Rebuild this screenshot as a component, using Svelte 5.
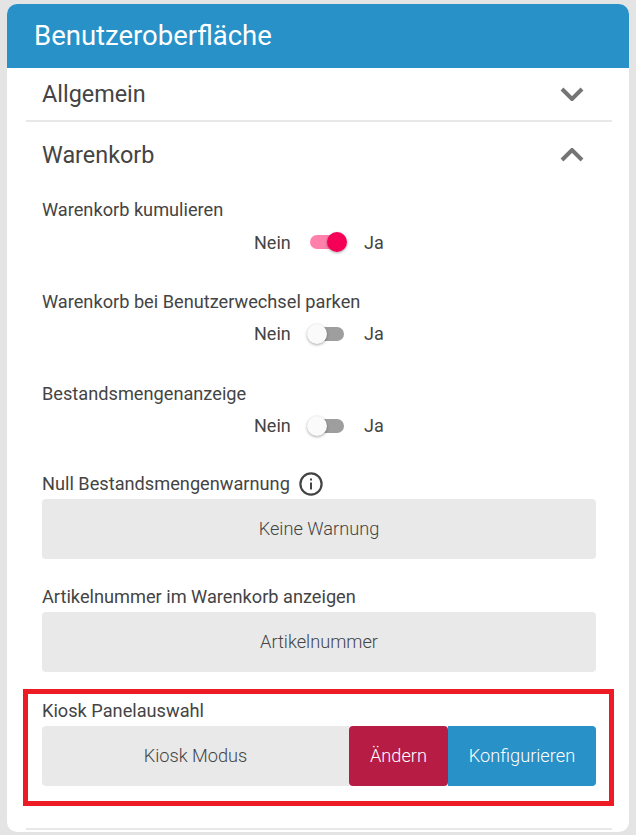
<script>
	const toggles = [
		{ label: 'Warenkorb kumulieren', on: true },
		{ label: 'Warenkorb bei Benutzerwechsel parken', on: false },
		{ label: 'Bestandsmengenanzeige', on: false }
	];
</script>

<div class="page">
	<div class="card">
		<h1 class="head">Benutzeroberfläche</h1>

		<div class="section first">
			<h2>Allgemein</h2>
			<svg class="chev" viewBox="0 0 24 14" width="24" height="14"><path d="M2 2 L12 12 L22 2" /></svg>
		</div>

		<div class="section open">
			<h2>Warenkorb</h2>
			<svg class="chev" viewBox="0 0 24 14" width="24" height="14"><path d="M2 12 L12 2 L22 12" /></svg>
		</div>

		<div class="fields">
			{#each toggles as t}
				<div class="field toggle-field">
					<div class="label">{t.label}</div>
					<div class="toggle-row">
						<span class="no">Nein</span>
						<span class="switch" class:on={t.on}><span class="thumb"></span></span>
						<span class="yes">Ja</span>
					</div>
				</div>
			{/each}

			<div class="field select-field">
				<div class="label">
					Null Bestandsmengenwarnung
					<svg class="info" viewBox="0 0 24 24" width="24" height="24">
						<circle cx="12" cy="12" r="10.6" />
						<rect x="11" y="10.5" width="2" height="7" />
						<rect x="11" y="6.5" width="2" height="2" />
					</svg>
				</div>
				<div class="select">Keine Warnung</div>
			</div>

			<div class="field select-field">
				<div class="label">Artikelnummer im Warenkorb anzeigen</div>
				<div class="select">Artikelnummer</div>
			</div>

			<div class="field select-field kiosk">
				<div class="label">Kiosk Panelauswahl</div>
				<div class="group">
					<div class="select">Kiosk Modus</div>
					<button class="btn change">Ändern</button>
					<button class="btn config">Konfigurieren</button>
				</div>
				<div class="highlight"></div>
			</div>
		</div>

		<div class="end"></div>
	</div>
</div>

<style>
	:global(body) {
		margin: 0;
		background: #e4e4e4;
	}

	.page {
		padding: 4px 7px 3px;
		font-family: Roboto, 'Liberation Sans', sans-serif;
		color: #444;
	}

	.card {
		background: #fff;
		border-radius: 10px;
		height: 828px;
		overflow: hidden;
		display: flex;
		flex-direction: column;
	}

	.head {
		margin: 0;
		height: 64px;
		line-height: 64px;
		padding-left: 27px;
		background: #2791c8;
		color: #fff;
		font-size: 27.5px;
		font-weight: 400;
	}

	.section {
		margin: 0 17px 0 19px;
		padding: 0 16px;
		display: flex;
		align-items: center;
		justify-content: space-between;
	}

	.section h2 {
		margin: 0;
		font-size: 23.4px;
		font-weight: 400;
		color: #444;
	}

	.section.first {
		height: 52px;
		border-bottom: 2px solid #e8e8e8;
	}

	.section.open {
		height: 66px;
	}

	.chev {
		margin-left: auto;
		transform: translateX(-12px);
	}

	.chev path {
		fill: none;
		stroke: #757575;
		stroke-width: 4;
	}

	.fields {
		margin: 7px 19px 0;
		padding: 0 14px 0 16px;
		display: flex;
		flex-direction: column;
	}

	.label {
		font-size: 18.2px;
		line-height: 24px;
		height: 24px;
		color: #444;
		display: flex;
		align-items: center;
		gap: 9px;
	}

	.toggle-field {
		height: 92px;
		padding-top: 3px;
		box-sizing: border-box;
	}

	.toggle-field:nth-child(1) {
		height: 91.5px;
	}

	.toggle-row {
		display: flex;
		align-items: center;
		justify-content: center;
		height: 24px;
		margin-top: 8px;
		font-size: 18px;
	}

	.no {
		width: 37px;
	}

	.yes {
		width: 20px;
	}

	.switch {
		position: relative;
		width: 34px;
		height: 14px;
		margin: 0 20px 0 19px;
		border-radius: 7px;
		background: #9e9e9e;
	}

	.switch.on {
		background: #ff80ab;
	}

	.thumb {
		position: absolute;
		top: -3px;
		left: -3px;
		width: 20px;
		height: 20px;
		border-radius: 50%;
		background: #fafafa;
		box-shadow: 0 1px 3px rgba(0, 0, 0, 0.35);
	}

	.switch.on .thumb {
		left: 17px;
		background: #f50057;
	}

	.select-field {
		position: relative;
		margin-top: 1px;
	}

	.select-field + .select-field {
		margin-top: 26px;
	}

	.select-field.kiosk {
		margin-top: 27px;
	}

	.select-field .label {
		margin-bottom: 3px;
	}

	.select {
		height: 60px;
		line-height: 60px;
		text-align: center;
		background: #e9e9e9;
		border-radius: 4px;
		font-size: 18.2px;
		font-weight: 300;
		color: #444;
	}

	.info {
		flex: none;
	}

	.info circle {
		fill: none;
		stroke: #444;
		stroke-width: 2.2;
	}

	.info rect {
		fill: #444;
	}

	.group {
		display: flex;
	}

	.group .select {
		flex: 1;
		border-radius: 4px 0 0 4px;
	}

	.btn {
		height: 60px;
		border: none;
		padding: 0;
		color: #fff;
		font-family: inherit;
		font-size: 18.2px;
		font-weight: 300;
	}

	.change {
		width: 99px;
		background: #b71c45;
		border-radius: 4px;
	}

	.config {
		width: 148px;
		background: #2791c8;
		border-radius: 0 4px 4px 0;
	}

	.highlight {
		position: absolute;
		top: -10px;
		bottom: -20px;
		left: -19px;
		right: -18px;
		border: 5px solid #ed1c24;
		pointer-events: none;
	}

	.end {
		margin: auto 17px 2px 19px;
		border-top: 2px solid #e8e8e8;
	}
</style>
